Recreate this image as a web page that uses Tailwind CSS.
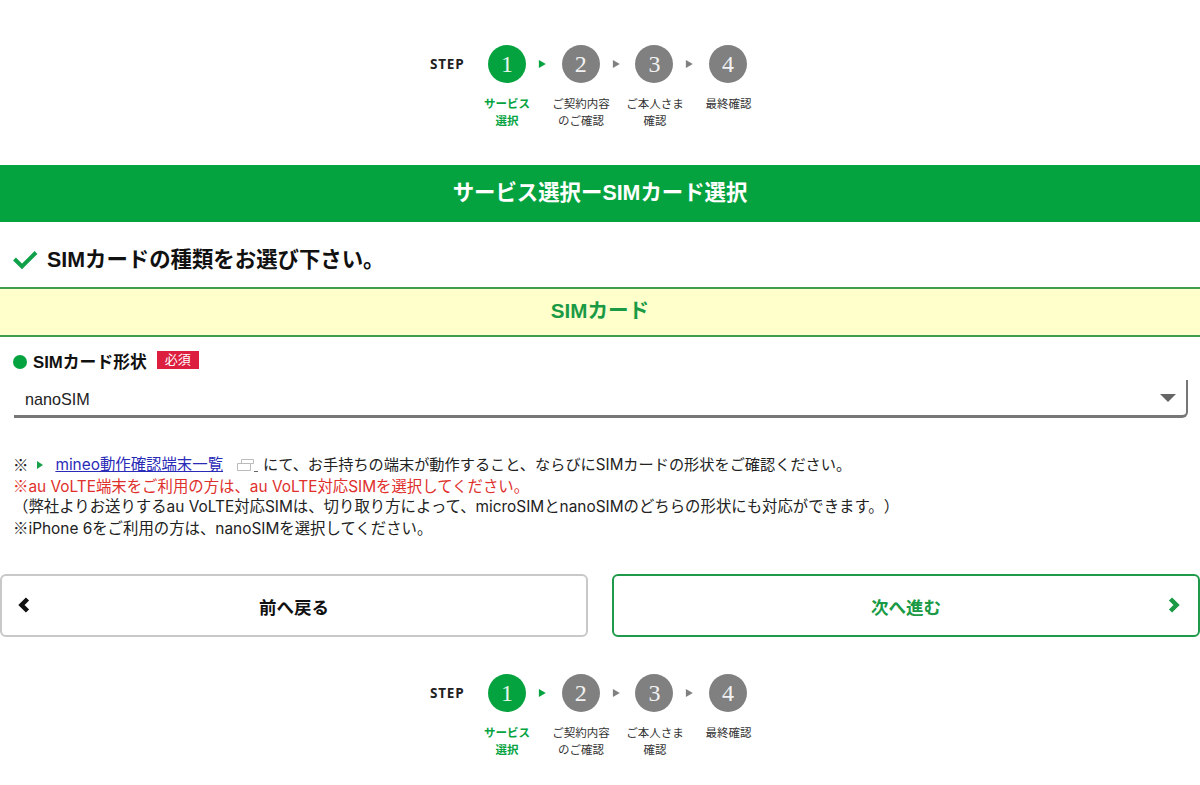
<!DOCTYPE html>
<html lang="ja">
<head>
<meta charset="utf-8">
<script src="https://cdn.jsdelivr.net/npm/@tailwindcss/browser@4"></script>
</head>
<body class="bg-white text-[#111] font-['Liberation_Sans','Noto_Sans_CJK_JP',sans-serif]">
<div class="w-[1200px] h-[785px] overflow-hidden">

  <div class="h-[165px] pt-[45px]">
    <div class="w-[320px] ml-[430px]">
      <div class="flex items-center h-[38px]">
        <div class="w-[58px] pt-[1px] text-[13.5px] tracking-[0.8px] font-bold font-['Open_Sans',sans-serif] text-[#222]">STEP</div>
        <div class="w-[38px] h-[38px] rounded-full bg-[#05a33f] text-white/90 flex items-center justify-center text-[24px] font-['Liberation_Serif',serif]">1</div>
        <svg class="w-[35.7px] h-[8px]" viewBox="0 0 36 8"><path d="M13 0l7 4-7 4z" fill="#05a33f"/></svg>
        <div class="w-[38px] h-[38px] rounded-full bg-[#808080] text-white/90 flex items-center justify-center text-[24px] font-['Liberation_Serif',serif]">2</div>
        <svg class="w-[35.7px] h-[8px]" viewBox="0 0 36 8"><path d="M13 0l7 4-7 4z" fill="#808080"/></svg>
        <div class="w-[38px] h-[38px] rounded-full bg-[#808080] text-white/90 flex items-center justify-center text-[24px] font-['Liberation_Serif',serif]">3</div>
        <svg class="w-[35.7px] h-[8px]" viewBox="0 0 36 8"><path d="M13 0l7 4-7 4z" fill="#808080"/></svg>
        <div class="w-[38px] h-[38px] rounded-full bg-[#808080] text-white/90 flex items-center justify-center text-[24px] font-['Liberation_Serif',serif]">4</div>
      </div>
      <div class="flex mt-[13px] ml-[40px] -mr-[20px] text-[11.5px] leading-[17px] text-center text-[#333]">
        <div class="w-[74px] font-bold text-[#05a33f]">サービス<br>選択</div>
        <div class="w-[74px]">ご契約内容<br>のご確認</div>
        <div class="w-[74px]">ご本人さま<br>確認</div>
        <div class="w-[73px]">最終確認</div>
      </div>
    </div>
  </div>

  <h1 class="h-[57px] bg-[#05a33f] text-white font-bold text-[21.4px] flex items-center justify-center">サービス選択ーSIMカード選択</h1>

  <div class="h-[65px] pl-[13px] pt-[21px] flex items-start gap-[9px]">
    <svg class="w-[25px] h-[20px] mt-[7px]" viewBox="0 0 25 20"><path d="M1.500 9l7.500 7.500L23 2.500" fill="none" stroke="#10a04a" stroke-width="4"/></svg>
    <h2 class="font-bold text-[21.4px] leading-[34px]">SIMカードの種類をお選び下さい。</h2>
  </div>

  <h3 class="h-[50px] pb-[1px] bg-[#ffffcc] border-y-2 border-[#3f9c4c] text-[#1a9a45] font-bold text-[20.6px] flex items-center justify-center">SIMカード</h3>

  <div class="flex items-center h-[43px] pl-[13px]">
    <span class="w-[14px] h-[14px] rounded-full bg-[#05a33f] mt-[6px]"></span>
    <span class="ml-[6px] font-bold text-[16.800px] mt-[8px]">SIMカード形状</span>
    <span class="ml-[10px] w-[42px] h-[18px] bg-[#dc1f3f] text-white text-[13px] leading-[18px] text-center mt-[2px]">必須</span>
  </div>

  <div class="ml-[14px] mr-[12px] h-[38px] pt-[3px] border-r-2 border-b-[3px] border-[#777] rounded-br-[6px] flex items-center justify-between pl-[11px] pr-[10px]">
    <span class="text-[16.200px] text-[#222]">nanoSIM</span>
    <svg class="w-[16px] h-[8px] -mt-[3px]" viewBox="0 0 16 8"><path d="M0 0h16l-8 8z" fill="#666"/></svg>
  </div>

  <div class="mt-[36px] pl-[13px] text-[15.4px] leading-[21px] text-[#222] font-['Inter','Noto_Sans_CJK_JP',sans-serif] [text-spacing-trim:space-all]">
    <p class="h-[21px] flex items-center"><span class="font-['Noto_Sans_CJK_JP',sans-serif]">※</span><svg class="w-[6px] h-[8px] ml-[9px] mr-[12px]" viewBox="0 0 6 8"><path d="M0 0l6 4-6 4z" fill="#19a04a"/></svg><a class="text-[#2a2ab8] underline">mineo動作確認端末一覧</a><svg class="w-[22px] h-[14px] ml-[13px] mr-[5px]" viewBox="0 0 22 14"><path d="M1.500 5.500h13v7h-13zM5.500 5.500v-4h12v4h-3" fill="none" stroke="#bbb"/><path d="M18 13.500h4" stroke="#666"/></svg><span class="text-[15.2px]">にて、お手持ちの端末が動作すること、ならびにSIMカードの形状をご確認ください。</span></p>
    <p class="h-[21px] text-[#e0302c]"><span class="font-['Noto_Sans_CJK_JP',sans-serif]">※</span>au VoLTE端末をご利用の方は、au VoLTE対応SIMを選択してください。</p>
    <p class="h-[21px]">（弊社よりお送りするau VoLTE対応SIMは、切り取り方によって、microSIMとnanoSIMのどちらの形状にも対応ができます。）</p>
    <p class="h-[21px]"><span class="font-['Noto_Sans_CJK_JP',sans-serif]">※</span>iPhone 6をご利用の方は、nanoSIMを選択してください。</p>
  </div>

  <div class="flex gap-[24px] mt-[36px]">
    <a class="relative w-[588px] h-[63px] border-2 border-[#c8c8c8] rounded-[6px] flex items-center justify-center font-bold text-[17.500px] text-[#111]">
      <svg class="absolute left-[16px] top-[21px] w-[13px] h-[16px]" viewBox="0 0 13 16"><path d="M9.500 2L3.500 8l6 6" fill="none" stroke="#111" stroke-width="4.500"/></svg>
      <span class="mt-[6px]">前へ戻る</span>
    </a>
    <a class="relative w-[588px] h-[63px] border-2 border-[#1f9a4a] rounded-[6px] flex items-center justify-center font-bold text-[17.500px] text-[#1a9a45]">
      <svg class="absolute right-[18px] top-[21px] w-[13px] h-[16px]" viewBox="0 0 13 16"><path d="M3.500 2l6 6-6 6" fill="none" stroke="#1a9a45" stroke-width="4.500"/></svg>
      <span class="mt-[6px]">次へ進む</span>
    </a>
  </div>

  <div class="h-[148px] pt-[37px]">
    <div class="w-[320px] ml-[430px]">
      <div class="flex items-center h-[38px]">
        <div class="w-[58px] pt-[1px] text-[13.5px] tracking-[0.8px] font-bold font-['Open_Sans',sans-serif] text-[#222]">STEP</div>
        <div class="w-[38px] h-[38px] rounded-full bg-[#05a33f] text-white/90 flex items-center justify-center text-[24px] font-['Liberation_Serif',serif]">1</div>
        <svg class="w-[35.7px] h-[8px]" viewBox="0 0 36 8"><path d="M13 0l7 4-7 4z" fill="#05a33f"/></svg>
        <div class="w-[38px] h-[38px] rounded-full bg-[#808080] text-white/90 flex items-center justify-center text-[24px] font-['Liberation_Serif',serif]">2</div>
        <svg class="w-[35.7px] h-[8px]" viewBox="0 0 36 8"><path d="M13 0l7 4-7 4z" fill="#808080"/></svg>
        <div class="w-[38px] h-[38px] rounded-full bg-[#808080] text-white/90 flex items-center justify-center text-[24px] font-['Liberation_Serif',serif]">3</div>
        <svg class="w-[35.7px] h-[8px]" viewBox="0 0 36 8"><path d="M13 0l7 4-7 4z" fill="#808080"/></svg>
        <div class="w-[38px] h-[38px] rounded-full bg-[#808080] text-white/90 flex items-center justify-center text-[24px] font-['Liberation_Serif',serif]">4</div>
      </div>
      <div class="flex mt-[13px] ml-[40px] -mr-[20px] text-[11.5px] leading-[17px] text-center text-[#333]">
        <div class="w-[74px] font-bold text-[#05a33f]">サービス<br>選択</div>
        <div class="w-[74px]">ご契約内容<br>のご確認</div>
        <div class="w-[74px]">ご本人さま<br>確認</div>
        <div class="w-[73px]">最終確認</div>
      </div>
    </div>
  </div>

</div>
</body>
</html>
